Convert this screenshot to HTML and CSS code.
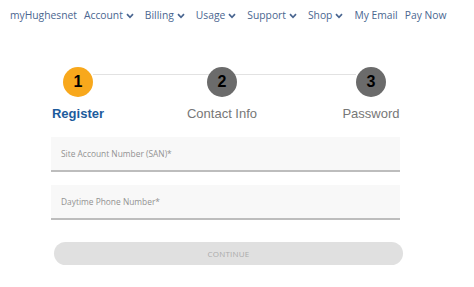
FILE: index.html
```html
<!DOCTYPE html>
<html>
<head>
<meta charset="utf-8">
<link rel="stylesheet" href="styles.css">
</head>
<body>
<nav class="nav">
  <a class="nav-item">myHughesnet</a>
  <a class="nav-item">Account<svg class="chev" viewBox="0 0 8 6"><path d="M1 1.2 L4 4.3 L7 1.2"/></svg></a>
  <a class="nav-item">Billing<svg class="chev" viewBox="0 0 8 6"><path d="M1 1.2 L4 4.3 L7 1.2"/></svg></a>
  <a class="nav-item">Usage<svg class="chev" viewBox="0 0 8 6"><path d="M1 1.2 L4 4.3 L7 1.2"/></svg></a>
  <a class="nav-item">Support<svg class="chev" viewBox="0 0 8 6"><path d="M1 1.2 L4 4.3 L7 1.2"/></svg></a>
  <a class="nav-item">Shop<svg class="chev" viewBox="0 0 8 6"><path d="M1 1.2 L4 4.3 L7 1.2"/></svg></a>
  <a class="nav-item">My Email</a>
  <a class="nav-item">Pay Now</a>
</nav>
<main class="main">
  <div class="steps">
    <div class="step-line"></div>
    <div class="step step-1 active">
      <div class="circle">1</div>
      <div class="label">Register</div>
    </div>
    <div class="step step-2">
      <div class="circle">2</div>
      <div class="label">Contact Info</div>
    </div>
    <div class="step step-3">
      <div class="circle">3</div>
      <div class="label">Password</div>
    </div>
  </div>
  <div class="fields">
    <div class="field"><span class="field-label">Site Account Number (SAN)*</span></div>
    <div class="field"><span class="field-label">Daytime Phone Number*</span></div>
  </div>
  <button class="continue">CONTINUE</button>
</main>
</body>
</html>
```
FILE: styles.css
```css
html, body {
  margin: 0;
  padding: 0;
  background: #ffffff;
}
body {
  width: 474px;
  height: 287px;
  overflow: hidden;
  font-family: "Liberation Sans", Arial, sans-serif;
}
.nav {
  display: flex;
  align-items: center;
  gap: 7px;
  padding: 5px 0 0 10px;
  height: 21px;
  font-family: "Open Sans", sans-serif;
  font-size: 10.3px;
  color: #4a6690;
  white-space: nowrap;
}
.nav-item {
  display: flex;
  align-items: center;
  line-height: 21px;
}
.chev {
  width: 8px;
  height: 6px;
  margin-left: 3px;
  margin-right: 4px;
  fill: none;
  stroke: #4a6690;
  stroke-width: 1.7;
}
.main {
  display: flex;
  flex-direction: column;
}
.steps {
  position: relative;
  display: flex;
  margin-top: 41px;
  padding-left: 38px;
}
.step-line {
  position: absolute;
  left: 93px;
  width: 263px;
  top: 7px;
  height: 1px;
  background: #e2e2e2;
}
.step {
  position: relative;
  width: 80px;
  display: flex;
  flex-direction: column;
  align-items: center;
}
.step-2 { margin-left: 64px; }
.step-3 { margin-left: 69px; }
.circle {
  width: 30px;
  height: 30px;
  border-radius: 50%;
  background: #6b6b6b;
  color: #000;
  font-weight: bold;
  font-size: 16px;
  line-height: 30px;
  text-align: center;
}
.step.active .circle {
  background: #f8a81c;
}
.label {
  margin-top: 9px;
  font-size: 13px;
  line-height: 16px;
  color: #777777;
}
.step.active .label {
  color: #1c5b9c;
  font-weight: bold;
}
.fields {
  display: flex;
  flex-direction: column;
  gap: 13px;
  margin: 15px 0 0 51px;
  width: 349px;
}
.field {
  height: 33px;
  background: #f8f8f8;
  border-bottom: 2px solid #bdbdbd;
  display: flex;
  align-items: center;
  padding-left: 10px;
}
.field-label {
  font-family: "Open Sans", sans-serif;
  font-size: 8.4px;
  color: #929292;
}
.continue {
  margin: 22px 0 0 54px;
  width: 349px;
  height: 23px;
  border: none;
  border-radius: 12px;
  background: #e0e0e0;
  color: #ababab;
  font-family: "Open Sans", sans-serif;
  font-size: 8px;
  letter-spacing: 0.2px;
  padding: 0;
}
```
